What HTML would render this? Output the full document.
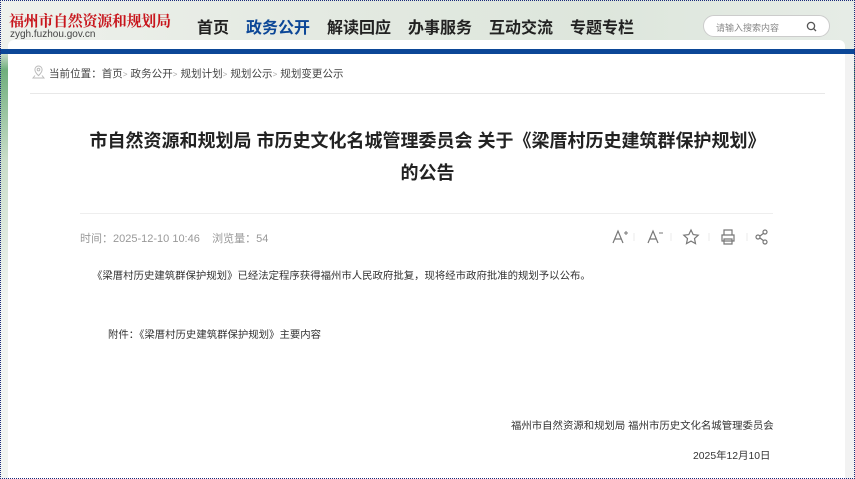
<!DOCTYPE html>
<html><head><meta charset="utf-8"><style>
*{margin:0;padding:0;box-sizing:border-box}
body{width:855px;height:479px;overflow:hidden;position:relative;font-family:"Liberation Sans","Noto Sans CJK SC",sans-serif;background:linear-gradient(180deg,#e4ebe3 0,#dfe6dc 50px,#6fae7c 70px,#c9ddc9 160px,#f1f4f1 300px);}
.frame{position:absolute;inset:0;border:1px dotted #1a2a7a;z-index:10;pointer-events:none}
.hdr{position:absolute;left:0;top:0;width:855px;height:49px;background:linear-gradient(90deg,#eef1ec,#e3e9e1 40%,#dde6dc 70%,#e6ece6)}
.logo{position:absolute;left:9px;top:10px;font-family:"Noto Serif CJK SC",serif;font-weight:bold;font-size:15px;color:#c8161d;letter-spacing:-0.3px}
.url{position:absolute;left:10px;top:29px;font-size:10px;color:#444}
.nav{position:absolute;top:14px;font-size:16px;font-weight:bold;color:#222}
.search{position:absolute;left:703px;top:15px;width:127px;height:22px;border:1px solid #ccc;border-radius:11px;background:#fff;font-size:9px;color:#888;padding:5px 0 0 12px}
.panel{position:absolute;left:8px;top:40px;width:837px;height:439px;background:#fff;border-radius:6px 6px 0 0}
.bar{position:absolute;left:0;top:49px;width:855px;height:5px;background:#0c4797}
.rside{position:absolute;left:845px;top:54px;width:9px;height:425px;background:#f2f2f2}
.crumb{position:absolute;left:49px;top:66px;font-size:10.5px;color:#444;letter-spacing:0.05px}
.crumb i{font-style:normal;color:#aaa;font-size:8px}
.line1{position:absolute;left:30px;top:93px;width:795px;height:1px;background:#e8e8e8}
.title{position:absolute;left:0;width:855px;text-align:center;font-size:18px;font-weight:bold;color:#222}
.line2{position:absolute;left:80px;top:213px;width:693px;height:1px;background:#eee}
.meta{position:absolute;left:80px;top:230px;font-size:11px;color:#999}
.p{position:absolute;font-size:10.4px;color:#333}
.tools{position:absolute;left:610px;top:227px}
</style></head><body>
<div class="hdr"></div>
<div class="logo">福州市自然资源和规划局</div>
<div class="url">zygh.fuzhou.gov.cn</div>
<div class="nav" style="left:197px">首页</div>
<div class="nav" style="left:246px;color:#0c4797">政务公开</div>
<div class="nav" style="left:327px">解读回应</div>
<div class="nav" style="left:408px">办事服务</div>
<div class="nav" style="left:489px">互动交流</div>
<div class="nav" style="left:570px">专题专栏</div>
<div class="search">请输入搜索内容
<svg style="position:absolute;right:12px;top:5px" width="11" height="11" viewBox="0 0 11 11"><circle cx="5" cy="5" r="3.6" fill="none" stroke="#555" stroke-width="1.3"/><path d="M7.6 7.6L10 10" stroke="#555" stroke-width="1.3"/></svg></div>
<div class="panel"></div>
<div class="bar"></div>
<div class="rside"></div>
<svg style="position:absolute;left:32px;top:65px" width="13" height="14" viewBox="0 0 13 14"><path d="M6.5 1a3.6 3.6 0 0 1 3.6 3.6c0 2.6-3.6 6-3.6 6s-3.6-3.4-3.6-6A3.6 3.6 0 0 1 6.5 1z" fill="none" stroke="#bbb"/><circle cx="6.5" cy="4.6" r="1.3" fill="none" stroke="#bbb"/><path d="M3 10.5L1 13h11l-2-2.5" fill="none" stroke="#bbb"/></svg>
<div class="crumb">当前位置：首页<i>&gt;</i> 政务公开<i>&gt;</i> 规划计划<i>&gt;</i> 规划公示<i>&gt;</i> 规划变更公示</div>
<div class="line1"></div>
<div class="title" style="top:127px">市自然资源和规划局 市历史文化名城管理委员会 关于《梁厝村历史建筑群保护规划》</div>
<div class="title" style="top:159px">的公告</div>
<div class="line2"></div>
<div class="meta">时间：2025-12-10 10:46&nbsp;&nbsp;&nbsp;&nbsp;浏览量：54</div>
<div class="tools">
<svg width="165" height="20" viewBox="0 0 165 20" fill="none" stroke="#777" stroke-width="1.2">
<path d="M3 16L8 4l5 12M5 12h6"/><path d="M14 6h4M16 4v4" stroke-width="1"/>
<path d="M24 6v8" stroke="#eee"/>
<path d="M38 16l5-12 5 12M40 12h6"/><path d="M49 6h4" stroke-width="1"/>
<path d="M61 6v8" stroke="#eee"/>
<path d="M81 3l2.2 4.6 5 .6-3.7 3.4 1 5-4.5-2.5-4.5 2.5 1-5-3.7-3.4 5-.6z"/>
<path d="M99 6v8" stroke="#eee"/>
<path d="M114 8V3h8v5M112 8h12v6h-12zM114 12h8v5h-8z"/>
<path d="M137 6v8" stroke="#eee"/>
<circle cx="148" cy="10" r="2"/><circle cx="155" cy="5" r="2"/><circle cx="155" cy="15" r="2"/><path d="M150 9l3.3-2.5M150 11l3.3 2.5"/>
</svg></div>
<div class="p" style="left:92px;top:267px">《梁厝村历史建筑群保护规划》已经法定程序获得福州市人民政府批复，现将经市政府批准的规划予以公布。</div>
<div class="p" style="left:108px;top:326px">附件：《梁厝村历史建筑群保护规划》主要内容</div>
<div class="p" style="left:511px;top:417px">福州市自然资源和规划局 福州市历史文化名城管理委员会</div>
<div class="p" style="left:693px;top:447px">2025年12月10日</div>
<div class="frame"></div>
</body></html>
